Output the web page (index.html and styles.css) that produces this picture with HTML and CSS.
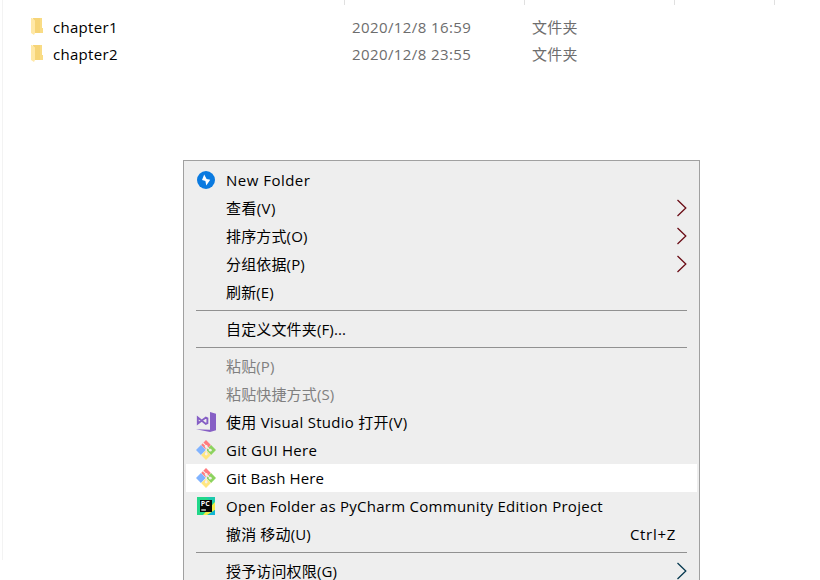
FILE: index.html
```html
<!DOCTYPE html>
<html lang="zh-CN">
<head>
<meta charset="utf-8">
<title>文件夹</title>
<link rel="stylesheet" href="styles.css">
</head>
<body>
<svg width="0" height="0" class="defs">
  <symbol id="folder" viewBox="0 0 13 18">
    <path d="M2 0h9v10h1v5H3z" fill="#f6d477"/>
    <path d="M9 0h2v10h1v5H9z" fill="#f9dc85"/>
    <path d="M0 0h1l3 2.5V15l-1 2-3-2z" fill="#ffe8a6"/>
  </symbol>
  <symbol id="arrow" viewBox="0 0 12 18">
    <path d="M1.5 1l8.3 8-8.3 8" fill="none" stroke="currentColor" stroke-width="1.3"/>
  </symbol>
  <symbol id="git" viewBox="0 0 20 20">
    <path d="M10 0l4.9 4.9-4.9 4.9-4.9-4.9z" fill="#ff7b7f"/>
    <path d="M4.9 5.1L9.8 10l-4.9 4.9L0 10z" fill="#80b3ff"/>
    <path d="M15.1 5.1L20 10l-4.9 4.9-4.9-4.9z" fill="#8dd35f"/>
    <path d="M10 10.2l4.9 4.9L10 20l-4.9-4.9z" fill="#ffe680"/>
    <path d="M7 2.8l3.2 3.4v8M10.2 6.5l4 3.7" fill="none" stroke="#f3f0ed" stroke-width="1.1"/>
    <circle cx="10.2" cy="6.4" r="1.4" fill="#f3f0ed"/>
    <circle cx="14.3" cy="10.2" r="1.4" fill="#f3f0ed"/>
    <circle cx="10.2" cy="14" r="1.4" fill="#f3f0ed"/>
  </symbol>
</svg>
<main class="files">
  <div class="header"><i></i><i></i><i></i><i></i></div>
  <div class="file"><svg class="folder"><use href="#folder"/></svg><span class="name">chapter1</span><span class="date">2020/12/8 16:59</span><span class="kind">文件夹</span></div>
  <div class="file"><svg class="folder"><use href="#folder"/></svg><span class="name">chapter2</span><span class="date">2020/12/8 23:55</span><span class="kind">文件夹</span></div>
</main>
<nav class="menu">
  <div class="item"><span class="icon"><svg width="18" height="18" viewBox="0 0 18 18"><circle cx="9" cy="9" r="9" fill="#0a7ae0"/><path d="M7.2 3.5L5 9l3.4.9.9 4.6 3.9-5.8-3.6-.8z" fill="#fff"/></svg></span><span class="label wide">New Folder</span></div>
  <div class="item"><span class="icon"></span><span class="label short">查看(V)</span><svg class="arrow"><use href="#arrow"/></svg></div>
  <div class="item"><span class="icon"></span><span class="label">排序方式(O)</span><svg class="arrow"><use href="#arrow"/></svg></div>
  <div class="item"><span class="icon"></span><span class="label">分组依据(P)</span><svg class="arrow"><use href="#arrow"/></svg></div>
  <div class="item"><span class="icon"></span><span class="label">刷新(E)</span></div>
  <hr>
  <div class="item"><span class="icon"></span><span class="label">自定义文件夹(F)...</span></div>
  <hr>
  <div class="item disabled"><span class="icon"></span><span class="label">粘贴(P)</span></div>
  <div class="item disabled"><span class="icon"></span><span class="label">粘贴快捷方式(S)</span></div>
  <div class="item"><span class="icon"><svg width="20" height="20" viewBox="0 0 20 20"><path d="M14 0l6 1.7v16.6L14 20 0 17.2l14 .6z" fill="#865fc5"/><path d="M1.8 5.5v6l8-6 1.6.8v4.8l-1.6.8z" fill="none" stroke="#865fc5" stroke-width="1.9"/></svg></span><span class="label latin">使用 Visual Studio 打开(V)</span></div>
  <div class="item"><span class="icon"><svg width="20" height="20"><use href="#git"/></svg></span><span class="label latin">Git GUI Here</span></div>
  <div class="item active"><span class="icon"><svg width="20" height="20"><use href="#git"/></svg></span><span class="label">Git Bash Here</span></div>
  <div class="item"><span class="icon"><svg width="18" height="18" viewBox="0 0 18 18"><path d="M0 0h18v18H0z" fill="#21d789"/><path d="M9 0h9v7z" fill="#1cc9ad"/><path d="M18 5v8l-8 5H6z" fill="#f5ec45"/><path d="M18 13v5h-7z" fill="#12b5d5"/><path d="M3 3h12v12H3z" fill="#080808"/><path d="M4.3 13h4.6" stroke="#fff" stroke-width="1.2"/><text class="pc" x="3.8" y="9.4">PC</text></svg></span><span class="label latin">Open Folder as PyCharm Community Edition Project</span></div>
  <div class="item"><span class="icon"></span><span class="label">撤消 移动(U)</span><span class="shortcut">Ctrl+Z</span></div>
  <hr>
  <div class="item"><span class="icon"></span><span class="label">授予访问权限(G)</span><svg class="arrow cool"><use href="#arrow"/></svg></div>
</nav>
</body>
</html>
```
FILE: styles.css
```css
* { box-sizing: border-box; }
body {
  margin: 0;
  height: 580px;
  overflow: hidden;
  background: #fff;
  color: #000;
  font: 15px/28px "Open Sans", "Noto Sans CJK SC", sans-serif;
}
.defs { display: block; }
.files { margin-left: 2px; height: 560px; border-left: 1px solid #f3f3f3; }
.header { display: grid; grid-template-columns: 180px 150px 100px 1px; height: 14px; padding-left: 341px; }
.header i { width: 1px; height: 5px; background: #e0e0e0; }
.file { display: grid; grid-template-columns: 22px 299px 180px 100px; height: 27px; line-height: 27px; padding-left: 28px; }
.folder { width: 13px; height: 18px; margin-top: 4px; }
.name { letter-spacing: 0.3px; }
.date { letter-spacing: 0.4px; }
.kind { letter-spacing: 0.2px; }
.date, .kind { color: #6d6d6d; }
.menu {
  position: absolute;
  left: 183px;
  top: 160px;
  width: 517px;
  height: 430px;
  padding: 5px 2px;
  border: 1px solid #a0a0a0;
  background: #eee;
}
.item { display: flex; align-items: center; height: 28px; padding: 0 9px 0 10px; white-space: nowrap; }
.icon { display: flex; align-items: center; justify-content: center; width: 20px; margin-right: 10px; }
.icon svg { flex: none; }
.label { letter-spacing: 0.15px; }
.latin { letter-spacing: 0.27px; }
.wide { letter-spacing: 0.48px; }
.short { letter-spacing: 0.4px; }
.menu hr { height: 1px; margin: 4px 10px; border: 0; background: #919191; }
.disabled { color: #808080; }
.active { background: #fff; }
.arrow { width: 12px; height: 18px; margin-left: auto; color: #6b0d16; }
.cool { color: #073a50; }
.shortcut { margin-left: auto; margin-right: 12px; letter-spacing: 0.7px; }
.pc { font: 700 7px "Open Sans", sans-serif; fill: #fff; }
```
